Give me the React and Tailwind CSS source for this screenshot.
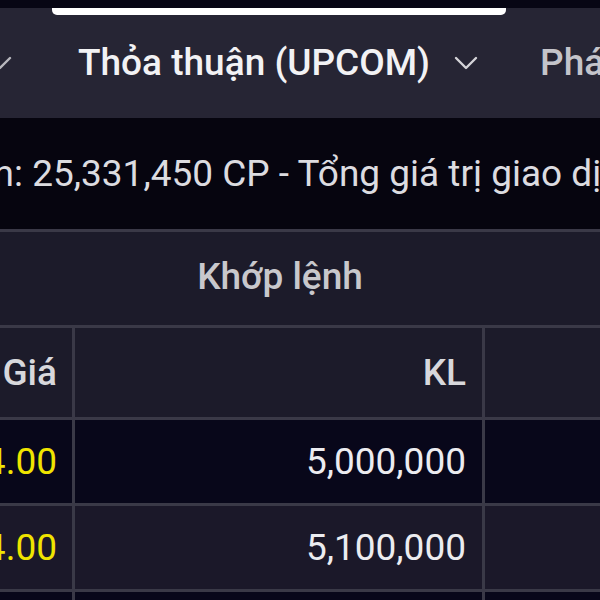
import { Fragment } from 'react'

function Chevron({ className }) {
  return (
    <svg
      viewBox="0 0 24 14"
      className={className}
      fill="none"
      stroke="currentColor"
      strokeWidth="2.4"
      strokeLinecap="round"
      strokeLinejoin="round"
    >
      <path d="M2 2l10 10 10-10" />
    </svg>
  )
}

function Tab({ label, active }) {
  return (
    <div className="flex h-full shrink-0 flex-col">
      <div className={active ? 'h-[7px] rounded-b-[5px] bg-white' : 'h-[7px]'} />
      <div className="flex flex-1 items-center gap-[24px] pl-[26px] pr-[28px] pb-[7px]">
        <span
          className={
            active
              ? 'whitespace-nowrap text-[37px] font-medium text-[#f2f2f4]'
              : 'whitespace-nowrap text-[37px] font-medium text-[#c4c4ca]'
          }
        >
          {label}
        </span>
        <Chevron className="h-[14px] w-[24px] shrink-0 text-[#d4d4d8]" />
      </div>
    </div>
  )
}

const rows = [
  { price: '14.00', vol: '5,000,000', bg: 'bg-[#08071a]' },
  { price: '14.00', vol: '5,100,000', bg: 'bg-[#1b1829]' },
  { price: '14.00', vol: '5,000,000', bg: 'bg-[#08071a]' },
]

export default function App() {
  return (
    <div className="h-[600px] w-[600px] overflow-hidden bg-[#06050f] font-['Roboto',sans-serif]">
      <div className="h-[8px] bg-[#070614]" />

      {/* Tabs */}
      <div className="flex h-[110px] bg-[#262534]">
        <div className="flex h-full w-[52px] shrink-0 justify-end overflow-hidden">
          <div className="flex h-full shrink-0 flex-col">
            <div className="h-[7px]" />
            <div className="flex flex-1 items-center gap-[24px] pr-[40px] pb-[7px]">
              <span className="whitespace-nowrap text-[37px] font-medium text-[#c4c4ca]">
                Thỏa thuận (HNX)
              </span>
              <Chevron className="h-[14px] w-[24px] shrink-0 text-[#b8b8be]" />
            </div>
          </div>
        </div>
        <Tab label="Thỏa thuận (UPCOM)" active />
        <div className="flex h-full shrink-0 flex-col">
          <div className="h-[7px]" />
          <div className="flex flex-1 items-center pl-[34px] pb-[7px]">
            <span className="whitespace-nowrap text-[37px] font-medium text-[#c4c4ca]">
              Phái sinh
            </span>
          </div>
        </div>
      </div>

      {/* Summary */}
      <div className="flex h-[111px] items-center whitespace-nowrap text-[37px] text-[#dcdce0]">
        <div className="flex w-[14px] shrink-0 justify-end overflow-hidden">
          <span>Tổng khối lượng thỏa thuận</span>
        </div>
        <span>: 25,331,450 CP - Tổng giá trị giao dịch: 355,000,000,000 VNĐ</span>
      </div>

      {/* Table */}
      <div className="-ml-[78px] grid w-max grid-cols-[150px_407px_153px_150px] gap-[3px] bg-[#3a3947] pt-[3px] text-[37px]">
        <div className="col-span-3 flex h-[93px] items-center justify-center bg-[#1c1b2a] pb-[4px] font-medium text-[#c8c8cc]">
          Khớp lệnh
        </div>
        <div className="bg-[#1c1b2a]" />

        <div className="flex h-[89px] items-center justify-end bg-[#1c1b2a] pr-[15px] font-medium text-[#d8d8dc]">
          Giá
        </div>
        <div className="flex items-center justify-end bg-[#1c1b2a] pr-[16px] font-medium text-[#d8d8dc]">
          KL
        </div>
        <div className="bg-[#1c1b2a]" />
        <div className="bg-[#1c1b2a]" />

        {rows.map((r, i) => (
          <Fragment key={i}>
            <div className={`flex h-[83px] items-center justify-end pr-[15px] text-[#f0e400] ${r.bg}`}>
              {r.price}
            </div>
            <div className={`flex items-center justify-end pr-[16px] text-[#ececf0] ${r.bg}`}>
              {r.vol}
            </div>
            <div className={r.bg} />
            <div className={r.bg} />
          </Fragment>
        ))}
      </div>
    </div>
  )
}
